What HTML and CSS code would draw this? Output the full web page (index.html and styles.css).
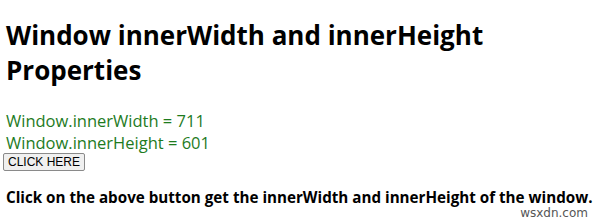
FILE: index.html
```html
<!DOCTYPE html>
<html>
<head>
<meta charset="utf-8">
<link rel="stylesheet" href="styles.css">
</head>
<body>
<h1 class="title">Window innerWidth and innerHeight Properties</h1>
<div class="result">Window.innerWidth = 711</div>
<div class="result">Window.innerHeight = 601</div>
<button class="btn">CLICK HERE</button>
<p class="note">Click on the above button get the innerWidth and innerHeight of the window.</p>
<span class="mark">wsxdn.com</span>
</body>
</html>
```
FILE: styles.css
```css
body {
  margin: 0;
  padding: 0 6px;
  font-family: "Open Sans", "Noto Sans", sans-serif;
  color: #000;
  background: #fff;
  position: relative;
  height: 219px;
  overflow: hidden;
}
.title {
  font-size: 26px;
  font-weight: 700;
  line-height: 35px;
  margin: 18px 0 22px;
  width: 520px;
}
.result {
  font-size: 16.5px;
  color: #1e7b1e;
  line-height: 22px;
}
.btn {
  display: block;
  font-family: "Liberation Sans", Arial, sans-serif;
  font-size: 12px;
  padding: 0;
  margin: -1px 0 0 -3px;
  background: #f0f0f0;
  border: 1px solid #8a8a8a;
  border-radius: 2px;
  height: 18px;
  width: 82px;
  line-height: 16px;
  text-align: center;
  white-space: nowrap;
  color: #000;
}
.note {
  font-size: 15.2px;
  font-weight: 700;
  line-height: 18px;
  margin: 17px 0 0;
}
.mark {
  position: absolute;
  right: 12px;
  bottom: 0;
  font-family: "DejaVu Sans", sans-serif;
  font-size: 12px;
  line-height: 12px;
  color: #555;
}
```
